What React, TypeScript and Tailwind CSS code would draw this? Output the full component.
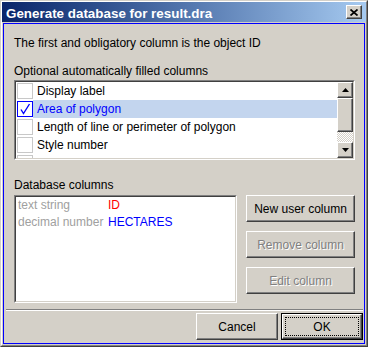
import React from "react";

const raised =
  "border border-t-white border-l-white border-r-[#404040] border-b-[#404040] shadow-[inset_-1px_-1px_0_#808080]";
const sunken =
  "border border-t-[#808080] border-l-[#808080] border-r-white border-b-white";
const sunkenInner =
  "border border-t-[#404040] border-l-[#404040] border-r-[#d4d0c8] border-b-[#d4d0c8]";

function Checkbox({ checked }: { checked?: boolean }) {
  return (
    <div
      className={
        "w-[16px] h-[16px] bg-white border " +
        (checked ? "border-[#0000ff]" : "border-[#c8c8c8]")
      }
    >
      {checked && (
        <svg width="14" height="14" viewBox="0 0 14 14">
          <path d="M3 7.5 L5.5 11.5 L11.5 2" stroke="#0000ff" strokeWidth="1.4" fill="none" />
        </svg>
      )}
    </div>
  );
}

function Arrow({ up }: { up?: boolean }) {
  return (
    <svg width="7" height="4" viewBox="0 0 7 4">
      {up ? <path d="M3.5 0 L7 4 L0 4 Z" fill="#000" /> : <path d="M0 0 L7 0 L3.5 4 Z" fill="#000" />}
    </svg>
  );
}

function Btn({
  children,
  disabled,
  className = "",
}: {
  children: React.ReactNode;
  disabled?: boolean;
  className?: string;
}) {
  return (
    <div
      className={
        raised +
        " bg-[#d4d0c8] flex items-center justify-center text-[12px] leading-[14px] " +
        (disabled ? "text-[#808080] [text-shadow:1px_1px_0_#ffffff] " : "text-black ") +
        className
      }
    >
      {children}
    </div>
  );
}

export default function App() {
  const rows = [
    "Display label",
    "Area of polygon",
    "Length of line or perimeter of polygon",
    "Style number",
    "Symbol size",
  ];
  return (
    <div className="w-[368px] h-[347px] bg-[#d4d0c8] border border-t-[#d4d0c8] border-l-[#d4d0c8] border-r-[#404040] border-b-[#404040] [font-family:'Liberation_Sans',Arial,sans-serif] text-black">
      <div className="h-full border border-t-white border-l-white border-r-[#808080] border-b-[#808080] flex flex-col">
        {/* Title bar */}
        <div className="h-[20px] shrink-0 flex items-center bg-gradient-to-r from-[#0a246a] to-[#a6caf0] pl-[4px] pr-[4px]">
          <span className="text-white font-bold text-[13.4px] leading-[15px] mt-[2px] whitespace-nowrap">
            Generate database for result.dra
          </span>
          <div className={raised + " ml-auto w-[16px] h-[14px] bg-[#d4d0c8] flex items-center justify-center"}>
            <svg width="8" height="7" viewBox="0 0 8 7">
              <path d="M0.5 0.5 L7.5 6.5 M7.5 0.5 L0.5 6.5" stroke="#000" strokeWidth="1.7" fill="none" />
            </svg>
          </div>
        </div>

        {/* Client */}
        <div className="mt-[1px] mx-[1px] mb-[1px] flex-1 border border-[#0000ff] flex flex-col">
          <div className="ml-[10px] mt-[12px] h-[14px] text-[12px] leading-[14px] whitespace-nowrap">
            The first and obligatory column is the object ID
          </div>
          <div className="ml-[10px] mt-[14px] h-[14px] text-[12px] leading-[14px] whitespace-nowrap">
            Optional automatically filled columns
          </div>

          {/* Optional list */}
          <div className={sunken + " ml-[10px] mt-[2px] w-[341px] h-[80px]"}>
            <div className={sunkenInner + " h-full bg-white flex"}>
              <div className="flex-1 flex flex-col overflow-hidden">
                {rows.map((r, i) => (
                  <div key={r} className="h-[18px] shrink-0 flex">
                    <div className="w-[17px] pl-[1px] pt-[1px]">
                      <Checkbox checked={i === 1} />
                    </div>
                    <div
                      className={
                        "flex-1 pl-[4px] text-[12px] leading-[18px] whitespace-nowrap " +
                        (i === 1 ? "bg-[#c3d5ee] text-[#0000ff]" : "")
                      }
                    >
                      {r}
                    </div>
                  </div>
                ))}
              </div>
              {/* Scrollbar */}
              <div className="w-[16px] flex flex-col">
                <div className={raised + " h-[16px] bg-[#d4d0c8] flex items-center justify-center"}>
                  <Arrow up />
                </div>
                <div className={raised + " h-[34px] bg-[#d4d0c8]"} />
                <div className="flex-1 bg-[repeating-conic-gradient(#ffffff_0_25%,#d4d0c8_0_50%)] bg-[length:2px_2px]" />
                <div className={raised + " h-[16px] bg-[#d4d0c8] flex items-center justify-center"}>
                  <Arrow />
                </div>
              </div>
            </div>
          </div>

          <div className="ml-[10px] mt-[18px] h-[14px] text-[12px] leading-[14px] whitespace-nowrap">
            Database columns
          </div>

          <div className="ml-[10px] mt-[3px] flex">
            <div className={sunken + " w-[223px] h-[108px]"}>
              <div className={sunkenInner + " h-full bg-white pl-[2px] text-[12px] leading-[17px]"}>
                <div className="flex h-[17px]">
                  <span className="w-[90px] text-[#a0a0a0]">text string</span>
                  <span className="text-[#ff0000]">ID</span>
                </div>
                <div className="flex h-[17px]">
                  <span className="w-[90px] text-[#a0a0a0]">decimal number</span>
                  <span className="text-[#0000ff]">HECTARES</span>
                </div>
              </div>
            </div>
            <div className="ml-[9px] w-[109px] flex flex-col gap-[9px]">
              <Btn className="h-[27px]">New user column</Btn>
              <Btn className="h-[27px]" disabled>
                Remove column
              </Btn>
              <Btn className="h-[27px]" disabled>
                Edit column
              </Btn>
            </div>
          </div>

          {/* Separator */}
          <div className="mt-[6px] ml-[2px] mr-[1px] h-[2px] border-t border-t-[#808080] border-b border-b-white" />

          <div className="mt-[2px] mr-[1px] flex justify-end gap-[3px]">
            <Btn className="w-[82px] h-[27px]">Cancel</Btn>
            <div className="w-[82px] h-[27px] border border-black">
              <div className={raised + " h-full bg-[#d4d0c8] p-[2px]"}>
                <div className="h-full border border-dotted border-black flex items-center justify-center text-[12px] leading-[14px]">
                  OK
                </div>
              </div>
            </div>
          </div>
        </div>
      </div>
    </div>
  );
}
